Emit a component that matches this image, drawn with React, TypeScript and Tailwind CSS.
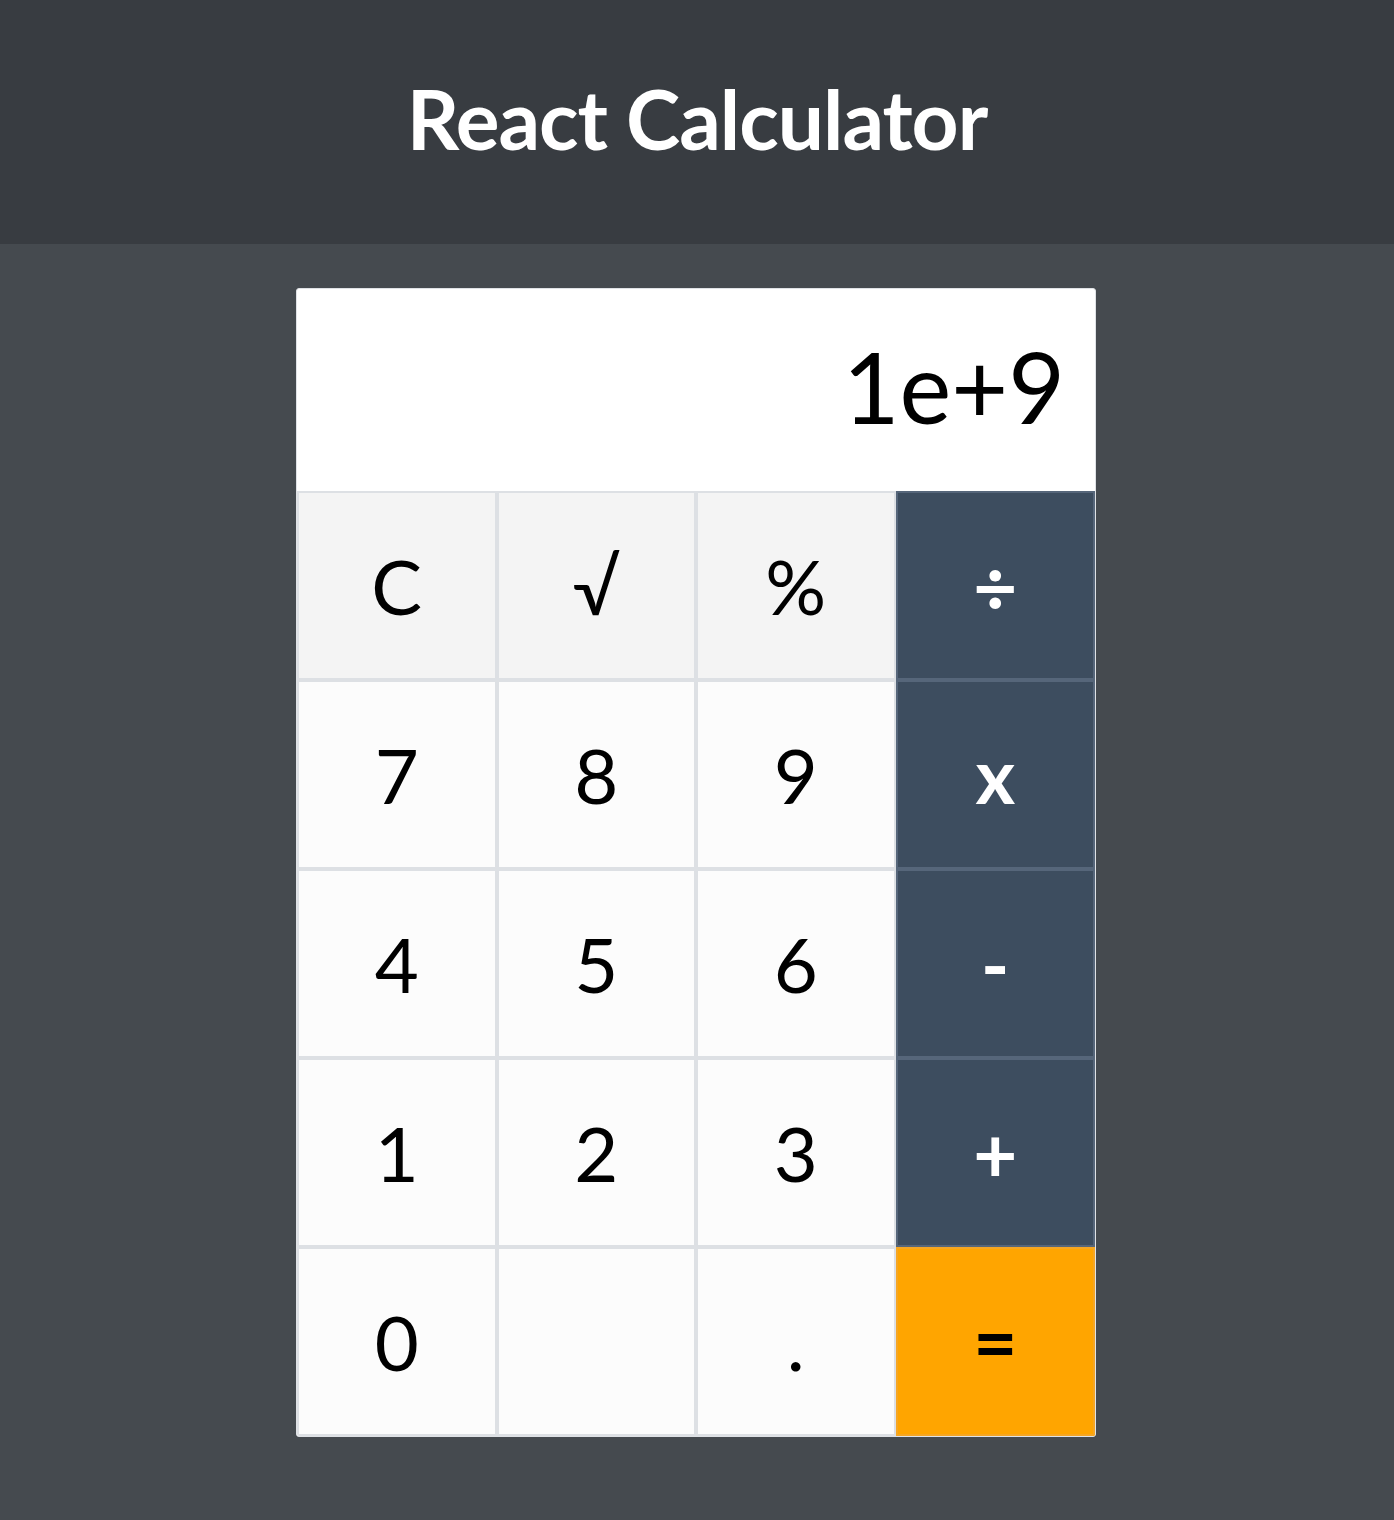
import React from "react";

type Btn = { label: string; kind: "fn" | "num" | "op" | "eq" };

const buttons: Btn[] = [
  { label: "C", kind: "fn" },
  { label: "√", kind: "fn" },
  { label: "%", kind: "fn" },
  { label: "÷", kind: "op" },
  { label: "7", kind: "num" },
  { label: "8", kind: "num" },
  { label: "9", kind: "num" },
  { label: "x", kind: "op" },
  { label: "4", kind: "num" },
  { label: "5", kind: "num" },
  { label: "6", kind: "num" },
  { label: "-", kind: "op" },
  { label: "1", kind: "num" },
  { label: "2", kind: "num" },
  { label: "3", kind: "num" },
  { label: "+", kind: "op" },
  { label: "0", kind: "num" },
  { label: "", kind: "num" },
  { label: ".", kind: "num" },
  { label: "=", kind: "eq" },
];

const kindClass: Record<Btn["kind"], string> = {
  fn: "bg-[#f4f4f4] border-[#dde0e4] text-black font-normal",
  num: "bg-[#fcfcfc] border-[#dde0e4] text-black font-normal",
  op: "bg-[#3d4d5f] border-[#56667a] text-white font-bold",
  eq: "bg-[#ffa500] border-[#f5a623] text-black font-bold",
};

export default function App() {
  return (
    <div
      className="min-h-[1520px] bg-[#454a4f]"
      style={{ fontFamily: "Lato, 'Open Sans', sans-serif" }}
    >
      <header className="h-[244px] bg-[#383c41] flex items-center justify-center pb-[8px]">
        <h1 className="text-white font-bold text-[82px] leading-none tracking-[-1px]">
          React Calculator
        </h1>
      </header>
      <main className="pt-[44px] pb-[84px] flex justify-center pr-[2px]">
        <div className="w-[800px] rounded-[3px] border border-[#dfe2e6] bg-white overflow-hidden">
          <div className="h-[202px] flex items-center justify-end pr-[30px] pb-[8px] text-[98px] leading-none text-black">
            1e+9
          </div>
          <div className="grid grid-cols-4">
            {buttons.map((b, i) => (
              <button
                key={i}
                className={`h-[189px] border-2 flex items-center justify-center text-[76px] leading-none ${kindClass[b.kind]}`}
              >
                {b.label}
              </button>
            ))}
          </div>
        </div>
      </main>
    </div>
  );
}
